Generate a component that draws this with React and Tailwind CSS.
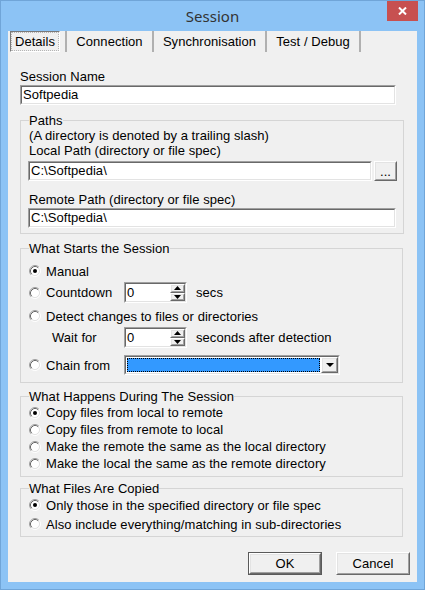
import React from "react";

const UI_FONT = "font-['Liberation_Sans',Arial,sans-serif]";

function Sunken({ className = "", innerClassName = "", children }) {
  return (
    <div className={`border border-t-[#a0a0a0] border-l-[#a0a0a0] border-r-white border-b-white ${className}`}>
      <div className={`h-full border border-t-[#696969] border-l-[#696969] border-r-[#e3e3e3] border-b-[#e3e3e3] bg-white ${innerClassName}`}>
        {children}
      </div>
    </div>
  );
}

function Raised({ className = "", innerClassName = "", children }) {
  return (
    <div className={`border border-t-white border-l-white border-r-[#696969] border-b-[#696969] ${className}`}>
      <div className={`h-full border border-t-[#e3e3e3] border-l-[#e3e3e3] border-r-[#a0a0a0] border-b-[#a0a0a0] bg-[#f0f0f0] ${innerClassName}`}>
        {children}
      </div>
    </div>
  );
}

function Radio({ checked }) {
  return (
    <svg width="12" height="12" viewBox="0 0 12 12" className="shrink-0">
      <circle cx="6" cy="6" r="4.2" fill="white" />
      <path d="M2.11 9.89 A5.5 5.5 0 0 1 9.89 2.11" fill="none" stroke="#a0a0a0" />
      <path d="M9.89 2.11 A5.5 5.5 0 0 1 2.11 9.89" fill="none" stroke="#ffffff" />
      <path d="M2.82 9.18 A4.5 4.5 0 0 1 9.18 2.82" fill="none" stroke="#696969" />
      <path d="M9.18 2.82 A4.5 4.5 0 0 1 2.82 9.18" fill="none" stroke="#e3e3e3" />
      {checked && <circle cx="6" cy="6" r="2" fill="black" />}
    </svg>
  );
}

function Spin({ value }) {
  return (
    <Sunken className="w-[63px] h-[21px]" innerClassName="flex">
      <div className="flex-1 pl-[1px] leading-[17px]">{value}</div>
      <div className="w-[15px] flex flex-col">
        <Raised className="flex-1" innerClassName="flex items-center justify-center">
          <svg width="7" height="4" viewBox="0 0 7 4">
            <path d="M3.5 0 L7 4 L0 4 Z" fill="black" />
          </svg>
        </Raised>
        <Raised className="flex-1" innerClassName="flex items-center justify-center">
          <svg width="7" height="4" viewBox="0 0 7 4">
            <path d="M0 0 L7 0 L3.5 4 Z" fill="black" />
          </svg>
        </Raised>
      </div>
    </Sunken>
  );
}

function Group({ title, className = "", children }) {
  return (
    <fieldset className={`w-[383px] border border-[#d5d5d5] pl-[8px] pr-[6px] ${className}`}>
      <legend className="leading-[15px]">{title}</legend>
      {children}
    </fieldset>
  );
}

function RadioRow({ checked, label, className = "" }) {
  return (
    <div className={`flex items-center gap-[5px] ${className}`}>
      <Radio checked={checked} />
      <span>{label}</span>
    </div>
  );
}

export default function App() {
  return (
    <div
      className={`w-[425px] h-[590px] bg-[#8cc3f5] border border-[#70a5d8] flex flex-col px-[7px] pb-[7px] text-[13px] leading-[15px] tracking-[0.05px] text-black ${UI_FONT}`}
    >
      {/* title bar */}
      <div className="relative h-[30px] flex items-center justify-center">
        <span className="font-['Noto_Sans',sans-serif] text-[15px] text-[#333333]">Session</span>
        <div className="absolute -right-[1px] top-0 w-[31px] h-[20px] bg-[#c75050] flex items-center justify-center">
          <svg width="9" height="8" viewBox="0 0 9 8">
            <path d="M1 0.5 L8 7.5 M8 0.5 L1 7.5" stroke="white" strokeWidth="2" />
          </svg>
        </div>
      </div>

      {/* client area */}
      <div className="flex-1 bg-[#f0f0f0] flex flex-col">
        {/* tabs */}
        <div className="flex h-[21px] pl-[2px]">
          <div className="w-[50px] border border-t-[#7a7a7a] border-l-[#7a7a7a] border-r-white border-b-white">
            <div className="h-full border border-dotted border-[#b5b5b5] flex items-center justify-center">
              Details
            </div>
          </div>
          <div className="w-[5px]" />
          <div className="w-[87px] border-l-2 border-[#b0b0b0] flex items-center justify-center">Connection</div>
          <div className="w-[113px] border-l-2 border-[#b0b0b0] flex items-center justify-center">Synchronisation</div>
          <div className="w-[96px] border-x-2 border-[#b0b0b0] flex items-center justify-center">Test / Debug</div>
        </div>

        <div className="pl-[12px] flex flex-col">
          <div className="mt-[17px]">Session Name</div>
          <Sunken className="mt-[1px] w-[376px] h-[20px]" innerClassName="pl-[1px] leading-[16px]">
            Softpedia
          </Sunken>

          <Group title="Paths" className="mt-[8px] pb-[5px]">
            <div>(A directory is denoted by a trailing slash)</div>
            <div>Local Path (directory or file spec)</div>
            <div className="flex gap-[2px] mt-[3px] -ml-[1px]">
              <Sunken className="w-[344px] h-[20px]" innerClassName="pl-[1px] leading-[16px]">
                C:\Softpedia\
              </Sunken>
              <Raised className="w-[23px] h-[20px]" innerClassName="flex items-end justify-center pb-[1px] leading-[12px]">
                ...
              </Raised>
            </div>
            <div className="mt-[11px]">Remote Path (directory or file spec)</div>
            <Sunken className="mt-[1px] -ml-[1px] w-[368px] h-[20px]" innerClassName="pl-[1px] leading-[16px]">
              C:\Softpedia\
            </Sunken>
          </Group>

          <Group title="What Starts the Session" className="mt-[7px] pb-[7px]">
            <RadioRow checked label="Manual" className="mt-[7px] h-[16px]" />
            <div className="mt-[3px] h-[21px] flex items-center">
              <Radio />
              <span className="ml-[5px] w-[78px]">Countdown</span>
              <Spin value="0" />
              <span className="ml-[9px]">secs</span>
            </div>
            <RadioRow label="Detect changes to files or directories" className="mt-[5px] h-[16px]" />
            <div className="mt-[3px] h-[21px] flex items-center pl-[23px]">
              <span className="w-[72px]">Wait for</span>
              <Spin value="0" />
              <span className="ml-[9px]">seconds after detection</span>
            </div>
            <div className="mt-[7px] h-[20px] flex items-center">
              <Radio />
              <span className="ml-[5px] w-[78px]">Chain from</span>
              <Sunken className="w-[216px] h-[20px]" innerClassName="flex">
                <div className="flex-1 m-[1px] bg-[#3399ff] border border-dotted border-black" />
                <Raised className="w-[17px]" innerClassName="flex items-center justify-center">
                  <svg width="8" height="4" viewBox="0 0 8 4">
                    <path d="M0 0 L8 0 L4 4 Z" fill="black" />
                  </svg>
                </Raised>
              </Sunken>
            </div>
          </Group>

          <Group title="What Happens During The Session" className="mt-[6px] pb-[4px]">
            <RadioRow checked label="Copy files from local to remote" className="h-[17px]" />
            <RadioRow label="Copy files from remote to local" className="h-[17px]" />
            <RadioRow label="Make the remote the same as the local directory" className="h-[17px]" />
            <RadioRow label="Make the local the same as the remote directory" className="h-[17px]" />
          </Group>

          <Group title="What Files Are Copied" className="mt-[4px] pb-[4px]">
            <RadioRow checked label="Only those in the specified directory or file spec" className="mt-[1px] h-[16px]" />
            <RadioRow label="Also include everything/matching in sub-directories" className="mt-[3px] h-[16px]" />
          </Group>
        </div>

        {/* dialog buttons */}
        <div className="mt-[15px] flex justify-end gap-[14px] pr-[7px]">
          <div className="w-[74px] h-[23px] border border-[#5a5a5a]">
            <Raised className="h-full" innerClassName="flex items-center justify-center">
              OK
            </Raised>
          </div>
          <Raised className="w-[74px] h-[23px]" innerClassName="flex items-center justify-center">
            Cancel
          </Raised>
        </div>
      </div>
    </div>
  );
}
